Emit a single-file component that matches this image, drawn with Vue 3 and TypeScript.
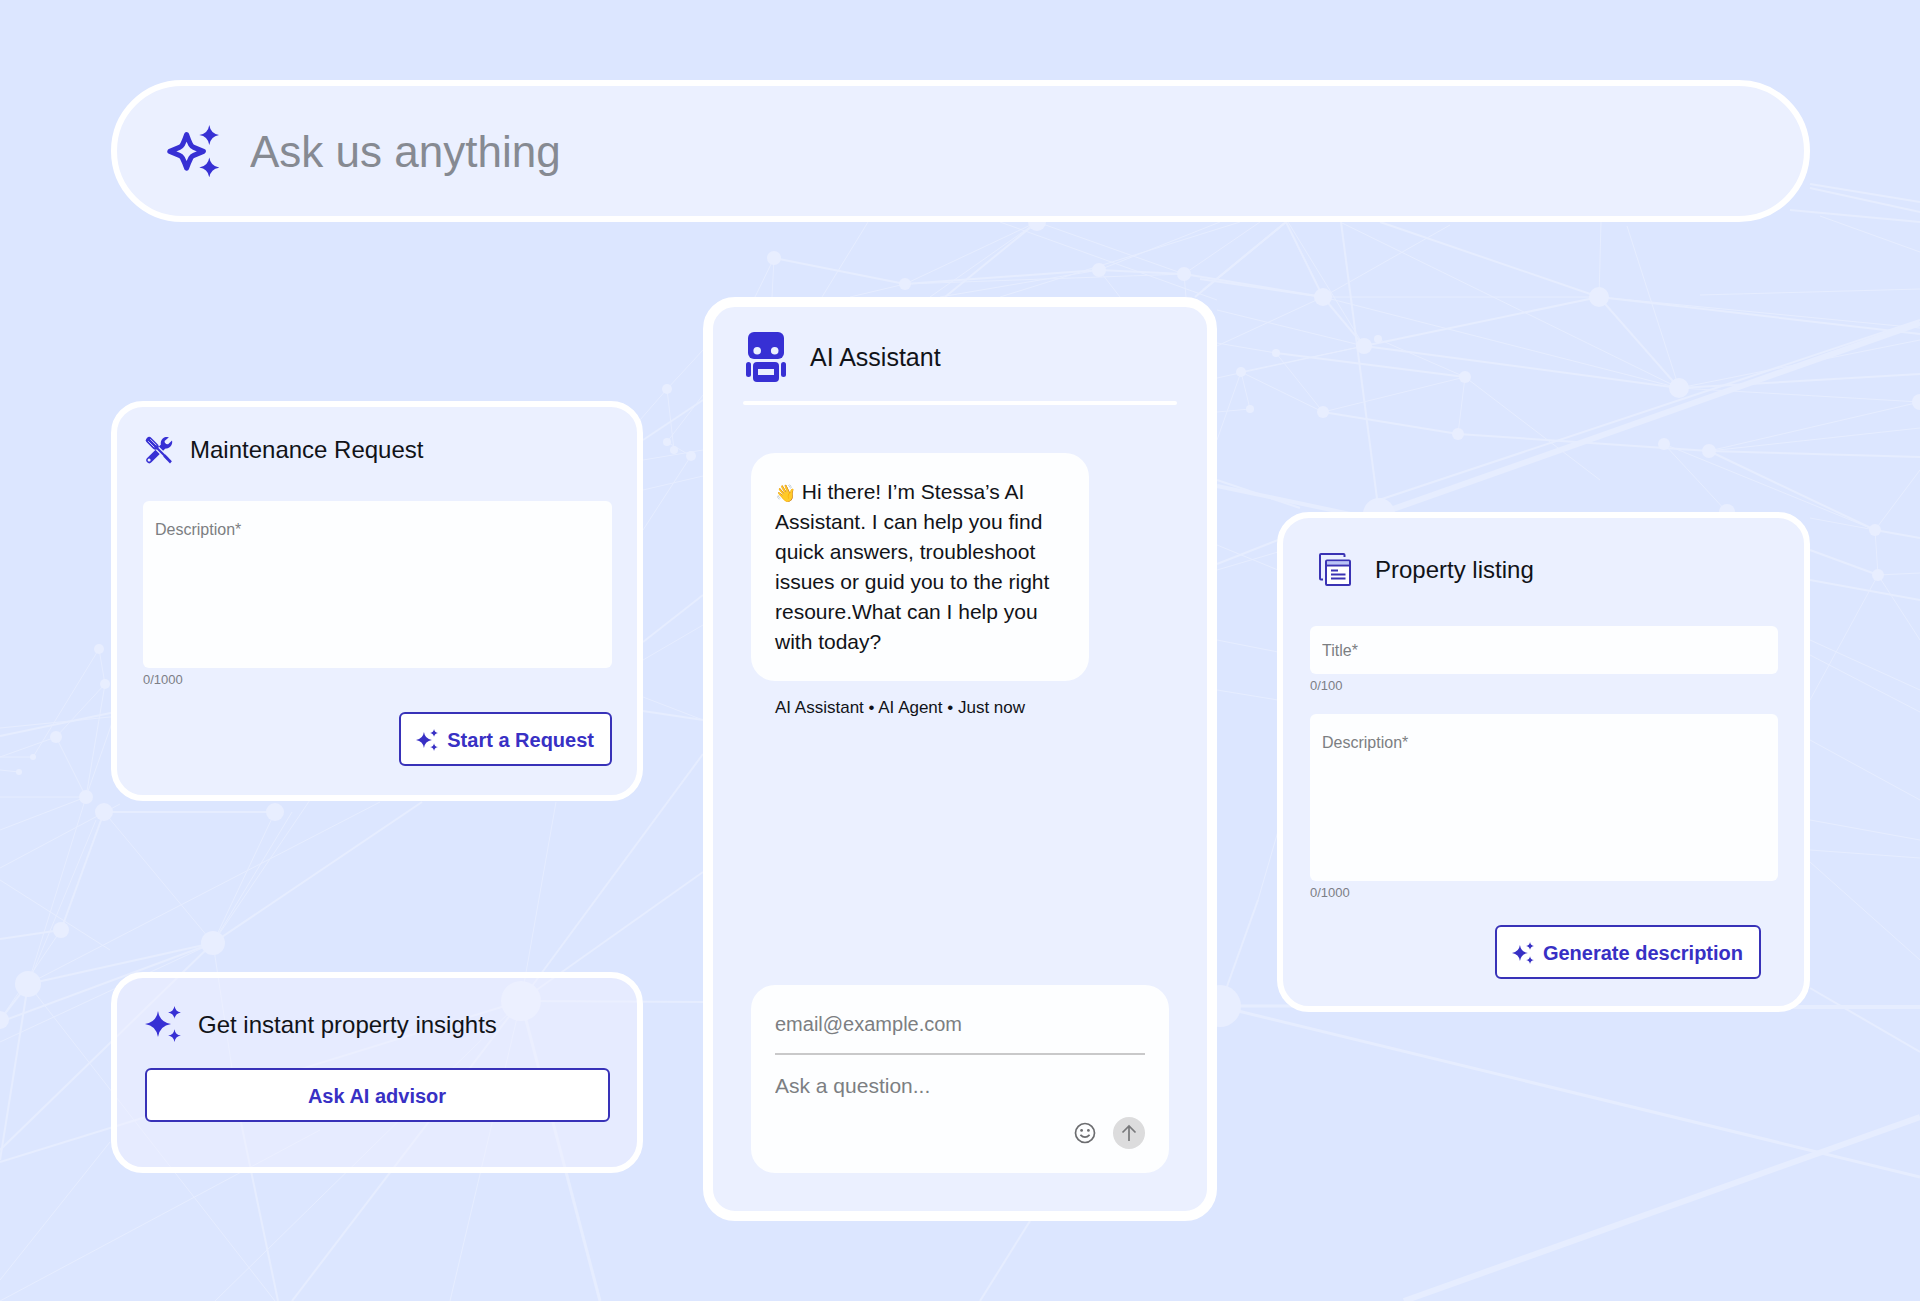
<script setup lang="ts">
import { ref } from 'vue'

type Point = [x: number, y: number, r: number]
type Line = [x1: number, y1: number, x2: number, y2: number, width: number]

const question = ref('')
const requestText = ref('')
const listingTitle = ref('')
const listingText = ref('')
const email = ref('')
const message = ref('')

/* Four-pointed star with softly concave sides */
function star(cx: number, cy: number, r: number): string {
  const k = r * 0.13
  return [
    `M${cx} ${cy - r}`,
    `Q${cx + k} ${cy - k} ${cx + r} ${cy}`,
    `Q${cx + k} ${cy + k} ${cx} ${cy + r}`,
    `Q${cx - k} ${cy + k} ${cx - r} ${cy}`,
    `Q${cx - k} ${cy - k} ${cx} ${cy - r}Z`,
  ].join('')
}

const sparkle = star(13, 18, 13) + star(29.5, 6.4, 6.4) + star(29.5, 29.6, 6.4)
const searchStars = star(42.3, 10, 10) + star(42.3, 42.6, 10)

const nodes: Point[] = [
  [99, 649, 5], [105, 684, 5], [56, 737, 6], [33, 757, 3], [19, 772, 3], [86, 797, 7],
  [104, 812, 9], [275, 812, 9], [61, 930, 8], [213, 943, 12], [28, 984, 13], [0, 1020, 9],
  [521, 1001, 20], [1323, 297, 9], [1599, 297, 10], [1364, 346, 8], [1378, 339, 4],
  [1276, 353, 4], [1241, 372, 5], [1250, 409, 4], [1323, 412, 6], [1465, 377, 6],
  [1458, 434, 6], [1679, 388, 10], [1664, 444, 6], [1709, 451, 7], [1920, 402, 8],
  [1875, 530, 6], [1878, 575, 6], [1379, 514, 16], [1727, 512, 8], [1220, 1006, 21],
  [774, 258, 7], [905, 284, 6], [1099, 270, 7], [1184, 274, 7], [1037, 222, 9],
  [667, 389, 5], [667, 442, 4], [674, 450, 4], [691, 456, 5],
]

const lines: Line[] = [
  [99, 649, 105, 684, 1], [105, 684, 86, 797, 1], [105, 684, 56, 737, 1], [56, 737, 0, 757, 1],
  [0, 736, 120, 711, 2], [0, 728, 120, 716, 1], [0, 757, 33, 757, 1], [0, 770, 19, 772, 1],
  [33, 757, 99, 649, 1], [86, 797, 0, 797, 1], [0, 830, 86, 797, 1], [0, 868, 120, 804, 1],
  [104, 812, 275, 812, 2], [104, 812, 61, 930, 2], [96, 820, 28, 984, 1], [104, 812, 213, 943, 1],
  [56, 737, 86, 797, 1], [86, 797, 120, 700, 1], [0, 939, 61, 930, 2], [61, 930, 0, 1020, 1],
  [213, 943, 28, 984, 2], [213, 943, 0, 1022, 2], [213, 943, 0, 1042, 1], [213, 943, 0, 1150, 2],
  [213, 943, 275, 812, 1], [213, 943, 422, 802, 2], [213, 943, 310, 800, 1],
  [213, 943, 238, 1108, 1], [238, 1108, 278, 1301, 2], [28, 984, 0, 1020, 2], [28, 984, 0, 1160, 2],
  [28, 984, 275, 1301, 1], [28, 984, 380, 802, 1], [0, 880, 110, 950, 1], [86, 797, 28, 984, 1],
  [521, 1001, 0, 1162, 2], [521, 1001, 703, 1002, 2], [521, 1001, 703, 872, 2],
  [521, 1001, 703, 754, 2], [521, 1001, 556, 802, 1], [521, 1001, 600, 1301, 3],
  [521, 1001, 292, 1301, 2], [521, 1001, 215, 1301, 1], [521, 1001, 450, 1301, 1],
  [110, 1142, 0, 1280, 1], [0, 1301, 320, 1130, 1], [292, 812, 213, 943, 1],
  [643, 642, 703, 595, 2], [643, 660, 703, 625, 1], [643, 711, 703, 720, 2], [643, 697, 703, 720, 1],
  [1030, 1221, 980, 1301, 2], [1220, 1006, 1258, 900, 2], [1220, 1006, 1300, 1006, 3],
  [1230, 1009, 1920, 1177, 3], [1404, 1301, 1920, 1117, 6], [1780, 1007, 1920, 1007, 4],
  [1810, 988, 1920, 1052, 2], [1810, 862, 1920, 960, 1], [1258, 900, 1290, 790, 1],
  [1286, 222, 1323, 297, 2], [1288, 222, 1364, 346, 1], [1286, 222, 1203, 290, 2],
  [1380, 222, 1599, 297, 2], [1340, 222, 1679, 388, 1], [1601, 222, 1599, 297, 1],
  [1627, 226, 1679, 388, 1], [1341, 222, 1379, 514, 2], [1323, 297, 1599, 297, 1],
  [1323, 297, 1364, 346, 2], [1323, 297, 1217, 346, 1], [1323, 297, 1200, 279, 2],
  [1323, 297, 1679, 388, 1], [1323, 297, 1450, 225, 1], [1599, 297, 1364, 346, 2],
  [1599, 297, 1679, 388, 2], [1599, 297, 1920, 334, 2], [1599, 297, 1920, 328, 1],
  [1700, 295, 1920, 289, 1], [1364, 346, 1679, 388, 2], [1364, 346, 1217, 310, 1],
  [1364, 346, 1217, 378, 1], [1276, 353, 1465, 377, 2], [1217, 343, 1276, 353, 1],
  [1241, 372, 1364, 346, 1], [1276, 353, 1323, 412, 1], [1241, 372, 1323, 412, 1],
  [1241, 372, 1217, 440, 1], [1241, 372, 1250, 409, 1], [1217, 412, 1250, 409, 1],
  [1378, 339, 1465, 377, 1], [1323, 412, 1465, 377, 1], [1323, 412, 1458, 434, 2],
  [1465, 377, 1458, 434, 1], [1458, 434, 1709, 451, 2], [1465, 377, 1600, 480, 1],
  [1679, 388, 1920, 374, 2], [1679, 388, 1920, 402, 1], [1679, 388, 1920, 340, 1],
  [1709, 451, 1920, 402, 1], [1709, 451, 1920, 428, 1], [1709, 451, 1920, 457, 2],
  [1709, 451, 1875, 530, 2], [1664, 444, 1875, 530, 1], [1664, 444, 1727, 512, 1],
  [1379, 514, 1920, 323, 6], [1379, 500, 1920, 320, 2], [1217, 486, 1379, 520, 4],
  [1217, 480, 1300, 508, 2], [1875, 530, 1920, 538, 2], [1875, 530, 1878, 575, 1],
  [1875, 530, 1920, 470, 1], [1878, 575, 1920, 573, 1], [1878, 575, 1810, 550, 2],
  [1810, 518, 1875, 530, 1], [1878, 575, 1920, 640, 1], [1810, 580, 1920, 600, 2],
  [1810, 640, 1920, 690, 1], [1810, 655, 1920, 712, 1], [1810, 700, 1878, 575, 1],
  [1810, 820, 1920, 840, 1], [1810, 850, 1920, 858, 1], [1810, 740, 1920, 800, 1],
  [1810, 184, 1920, 202, 2], [1810, 188, 1920, 212, 2], [1790, 210, 1920, 222, 2],
  [1820, 216, 1920, 252, 1], [1217, 564, 1278, 540, 2], [1217, 545, 1278, 570, 1],
  [1217, 570, 1278, 552, 1], [1217, 640, 1278, 652, 1], [1217, 690, 1278, 700, 1],
  [774, 258, 905, 284, 2], [774, 258, 772, 297, 1], [774, 258, 755, 297, 1],
  [868, 222, 822, 297, 1], [905, 284, 1099, 270, 2], [905, 284, 1184, 274, 1],
  [905, 284, 1037, 222, 1], [905, 284, 850, 297, 1], [1037, 222, 945, 297, 2],
  [1037, 222, 930, 297, 1], [1037, 222, 1184, 274, 1], [1099, 270, 1184, 274, 2],
  [1099, 270, 940, 297, 1], [1099, 270, 1220, 222, 1], [1184, 274, 1323, 297, 2],
  [1184, 274, 1260, 222, 1], [1184, 274, 1186, 297, 1], [1099, 270, 1120, 297, 1],
  [1286, 222, 1195, 297, 2], [1240, 222, 1000, 297, 1], [1000, 222, 1217, 300, 1],
  [667, 389, 703, 350, 1], [667, 389, 640, 420, 1], [667, 442, 703, 395, 1],
  [674, 450, 667, 389, 1], [691, 456, 667, 442, 1], [643, 440, 703, 400, 2],
  [643, 460, 703, 450, 1], [643, 490, 703, 476, 1], [643, 530, 691, 456, 1],
]
</script>

<template>
  <div class="page">
    <svg class="network" viewBox="0 0 1920 1301" preserveAspectRatio="xMidYMid slice" aria-hidden="true">
      <line
        v-for="(l, i) in lines"
        :key="`l${i}`"
        :x1="l[0]"
        :y1="l[1]"
        :x2="l[2]"
        :y2="l[3]"
        :stroke-width="l[4]"
      />
      <circle v-for="(n, i) in nodes" :key="`n${i}`" :cx="n[0]" :cy="n[1]" :r="n[2]" />
    </svg>

    <label class="search">
      <svg class="search-icon" viewBox="0 0 52 52" aria-hidden="true">
        <path
          d="M19.6 9.6Q21.6 15.5 23.8 19.8Q24.8 21.6 26.8 22.4L36.4 26.4L26.8 30.4Q24.8 31.2 23.8 33Q21.6 37.3 19.6 43.2Q17.6 37.3 15.4 33Q14.4 31.2 12.4 30.4L2.8 26.4L12.4 22.4Q14.4 21.6 15.4 19.8Q17.6 15.5 19.6 9.6Z"
          fill="none"
          stroke="currentColor"
          stroke-width="5"
          stroke-linejoin="round"
        />
        <path :d="searchStars" fill="currentColor" />
      </svg>
      <input v-model="question" type="text" placeholder="Ask us anything" aria-label="Ask us anything" />
    </label>

    <main class="board">
      <div class="column left">
        <section class="card form-card">
          <header class="head">
            <svg class="tools" viewBox="0 0 28 28" aria-hidden="true">
              <path d="M4.3 24.2L18.8 9.8" stroke="currentColor" stroke-width="6" stroke-linecap="round" />
              <path
                d="M23.9 1.2A6.3 6.3 0 0 0 15.9 8.6L19.6 12.3A6.3 6.3 0 0 0 27 4.6L23.1 8.3L19.9 7.9L19.6 5Z"
                fill="currentColor"
              />
              <circle cx="4.1" cy="24.1" r="1.5" fill="#ebf0ff" />
              <path d="M10 10L24.5 24.5" stroke="#ebf0ff" stroke-width="4.6" />
              <path d="M4.2 4.2L10.4 10.4" stroke="currentColor" stroke-width="6.4" stroke-linecap="round" />
              <path d="M10 10L23 23" stroke="currentColor" stroke-width="2.2" />
              <path d="M20.3 18.6L26.9 25.2L25 27.4L18.3 20.6Z" fill="currentColor" />
              <path d="M3.2 5.2L9.3 11.3M5.3 3.2L11.4 9.3" stroke="#ebf0ff" stroke-width="0.8" />
            </svg>
            <h2>Maintenance Request</h2>
          </header>
          <textarea v-model="requestText" placeholder="Description*" aria-label="Description" maxlength="1000"></textarea>
          <p class="count">{{ requestText.length }}/1000</p>
          <button class="outline" type="button">
            <svg class="spark-small" viewBox="0 0 36 36" aria-hidden="true"><path :d="sparkle" fill="currentColor" /></svg>
            Start a Request
          </button>
        </section>

        <section class="card insight-card">
          <header class="head">
            <svg class="spark" viewBox="0 0 36 36" aria-hidden="true"><path :d="sparkle" fill="currentColor" /></svg>
            <h2>Get instant property insights</h2>
          </header>
          <button class="outline wide" type="button">Ask AI advisor</button>
        </section>
      </div>

      <section class="card chat">
        <header class="head">
          <svg class="robot" viewBox="0 0 40 50" aria-hidden="true">
            <rect x="2" y="0" width="36" height="27" rx="6" fill="currentColor" />
            <circle cx="11.2" cy="18.7" r="3.8" fill="#ebf0ff" />
            <circle cx="28.7" cy="18.7" r="3.8" fill="#ebf0ff" />
            <rect x="0" y="30" width="5" height="15" rx="2.5" fill="currentColor" />
            <rect x="35" y="30" width="5" height="15" rx="2.5" fill="currentColor" />
            <rect x="7" y="30" width="26" height="20" rx="4" fill="currentColor" />
            <rect x="12" y="37" width="16" height="6" fill="#ebf0ff" />
          </svg>
          <h2>AI Assistant</h2>
        </header>
        <hr />
        <p class="bubble">👋 Hi there! I’m Stessa’s AI Assistant. I can help you find quick answers, troubleshoot issues or guid you to the right resoure.What can I help you with today?</p>
        <p class="meta">AI Assistant • AI Agent • Just now</p>
        <form class="composer" @submit.prevent>
          <input v-model="email" type="email" placeholder="email@example.com" aria-label="Email" />
          <textarea v-model="message" rows="1" placeholder="Ask a question..." aria-label="Ask a question"></textarea>
          <div class="actions">
            <button class="emoji" type="button" aria-label="Add emoji">
              <svg viewBox="0 0 22 22" aria-hidden="true" fill="none" stroke="currentColor" stroke-width="1.7">
                <circle cx="11" cy="11" r="9.5" />
                <path d="M6.4 12.8Q11 17.6 15.6 12.8" />
                <circle cx="7.6" cy="8.4" r="1.4" fill="currentColor" stroke="none" />
                <circle cx="14.4" cy="8.4" r="1.4" fill="currentColor" stroke="none" />
              </svg>
            </button>
            <button class="send" type="submit" aria-label="Send">
              <svg viewBox="0 0 32 32" aria-hidden="true" fill="none" stroke="currentColor" stroke-width="1.7">
                <path d="M16 24V9M9.5 15.5L16 9L22.5 15.5" />
              </svg>
            </button>
          </div>
        </form>
      </section>

      <div class="column right">
        <section class="card form-card listing">
          <header class="head">
            <svg class="pages" viewBox="0 0 32 33" aria-hidden="true" fill="none" stroke="currentColor" stroke-width="2">
              <path d="M25.5 4V2Q25.5 1 24.5 1H2Q1 1 1 2V25.5Q1 26.5 2 26.5H4" />
              <rect x="7" y="7.5" width="24" height="24.5" rx="1" fill="#ffffff" />
              <rect x="8" y="8.5" width="22" height="3" fill="#b9c4f8" stroke="none" />
              <path d="M7 12.5H31M12 17.5H19M12 21.5H26.5M12 25.5H26.5" />
            </svg>
            <h2>Property listing</h2>
          </header>
          <input v-model="listingTitle" type="text" placeholder="Title*" aria-label="Title" maxlength="100" />
          <p class="count">{{ listingTitle.length }}/100</p>
          <textarea v-model="listingText" placeholder="Description*" aria-label="Description" maxlength="1000"></textarea>
          <p class="count">{{ listingText.length }}/1000</p>
          <button class="outline" type="button">
            <svg class="spark-small" viewBox="0 0 36 36" aria-hidden="true"><path :d="sparkle" fill="currentColor" /></svg>
            Generate description
          </button>
        </section>
      </div>
    </main>
  </div>
</template>

<style>
body {
  margin: 0;
  background: #dce6ff;
}
</style>

<style scoped>
.page,
.page * {
  box-sizing: border-box;
}

.page {
  position: relative;
  min-height: 100vh;
  padding: 80px 110px 80px 111px;
  overflow: hidden;
  background: #dce6ff;
  color: #111318;
  font-family: "Liberation Sans", Arial, Helvetica, sans-serif;
}

.network {
  position: absolute;
  inset: 0;
  width: 100%;
  height: 100%;
  fill: #e8eeff;
  stroke: #e6edff;
}

.network circle {
  stroke: none;
}

input,
textarea,
button {
  margin: 0;
  padding: 0;
  border: 0;
  outline: 0;
  background: none;
  color: inherit;
  font-family: inherit;
}

textarea {
  display: block;
  resize: none;
  overflow: hidden;
}

h2,
p {
  margin: 0;
  font-weight: 400;
}

.search {
  position: relative;
  display: flex;
  align-items: center;
  gap: 31px;
  height: 142px;
  padding: 0 50px;
  border: 6px solid #ffffff;
  border-radius: 71px;
  background: #ebf0ff;
}

.search-icon {
  flex: none;
  width: 52px;
  height: 52px;
  color: #3730d4;
}

.search input {
  flex: 1;
  height: 56px;
  padding-top: 2px;
  font-size: 44px;
}

.search input::placeholder {
  color: #868a92;
  opacity: 1;
}

.board {
  position: relative;
  display: grid;
  grid-template-columns: 532fr 514px 533fr;
  align-items: start;
  gap: 60px;
  margin-top: 75px;
}

.column {
  display: flex;
  flex-direction: column;
}

.left {
  gap: 171px;
  padding-top: 104px;
}

.right {
  padding-top: 215px;
}

.card {
  display: flex;
  flex-direction: column;
  border: 6px solid #ffffff;
  border-radius: 32px;
  background: #ebf0ff;
}

.head {
  display: flex;
  align-items: center;
  gap: 17px;
}

.head svg {
  flex: none;
  color: #3730d4;
}

.head h2 {
  font-size: 24px;
  line-height: 28px;
}

.form-card {
  padding: 29px 25px 29px 26px;
}

.form-card .head {
  padding-left: 2px;
  margin-bottom: 37px;
}

.tools {
  width: 28px;
  height: 28px;
}

.form-card textarea,
.form-card input {
  width: 100%;
  padding: 0 12px;
  border-radius: 6px;
  background: #fdfeff;
  font-size: 16px;
  line-height: 20px;
}

.form-card textarea {
  height: 167px;
  padding-top: 19px;
}

.form-card input {
  height: 48px;
  padding-top: 2px;
}

.form-card ::placeholder,
.composer ::placeholder {
  color: #7c7e82;
  opacity: 1;
}

.count {
  margin-top: 4px;
  color: #7c7e86;
  font-size: 13px;
  line-height: 16px;
}

.outline {
  display: flex;
  align-items: center;
  align-self: flex-end;
  justify-content: center;
  gap: 9px;
  height: 54px;
  margin-top: 24px;
  padding: 2px 16px 0 15px;
  border: 2px solid #3832b8;
  border-radius: 6px;
  background: #ffffff;
  color: #3830c4;
  font-size: 20px;
  font-weight: 700;
  line-height: 24px;
}

.spark-small {
  width: 22px;
  height: 22px;
}

.insight-card {
  padding: 28px 27px 45px 28px;
  background: rgba(242, 242, 254, 0.45);
}

.insight-card h2 {
  padding-top: 2px;
}

.spark {
  width: 36px;
  height: 36px;
}

.wide {
  align-self: stretch;
  margin-top: 26px;
}

.chat {
  height: 924px;
  padding: 25px 30px 38px;
  border-width: 10px;
}

.chat .head {
  gap: 24px;
  padding-left: 3px;
}

.chat .head h2 {
  font-size: 25px;
}

.robot {
  width: 40px;
  height: 50px;
}

hr {
  width: 100%;
  height: 4px;
  margin: 19px 0 48px;
  border: 0;
  border-radius: 2px;
  background: #ffffff;
}

.bubble {
  width: 338px;
  margin-left: 8px;
  padding: 24px;
  border-radius: 24px;
  background: #fdfeff;
  font-size: 21px;
  line-height: 30px;
}

.bubble::first-letter {
  font-size: 17px;
  line-height: 20px;
}

.meta {
  margin: 17px 0 0 32px;
  font-size: 17px;
  line-height: 20px;
}

.composer {
  display: flex;
  flex-direction: column;
  margin: auto 8px 0;
  padding: 24px;
  border-radius: 24px;
  background: #fdfeff;
}

.composer input,
.composer textarea {
  font-size: 20px;
  line-height: 24px;
}

.composer input {
  height: 46px;
  padding-bottom: 14px;
  border-bottom: 2px solid #c9c9ca;
}

.composer textarea {
  height: 24px;
  margin-top: 19px;
  font-size: 21px;
}

.actions {
  display: flex;
  align-items: center;
  justify-content: flex-end;
  gap: 17px;
  margin-top: 19px;
}

.actions svg {
  display: block;
}

.emoji {
  width: 22px;
  color: #6c6d70;
}

.send {
  width: 32px;
  border-radius: 16px;
  background: #dcdcdd;
  color: #77787a;
}

.listing {
  padding: 35px 26px 27px 27px;
}

.listing .head {
  gap: 24px;
  padding-left: 9px;
  margin-bottom: 40px;
}

.listing .head svg {
  color: #3a33b4;
}

.pages {
  width: 32px;
  height: 33px;
}

.listing .count + textarea {
  margin-top: 20px;
}

.listing .outline {
  margin-right: 17px;
}
</style>
